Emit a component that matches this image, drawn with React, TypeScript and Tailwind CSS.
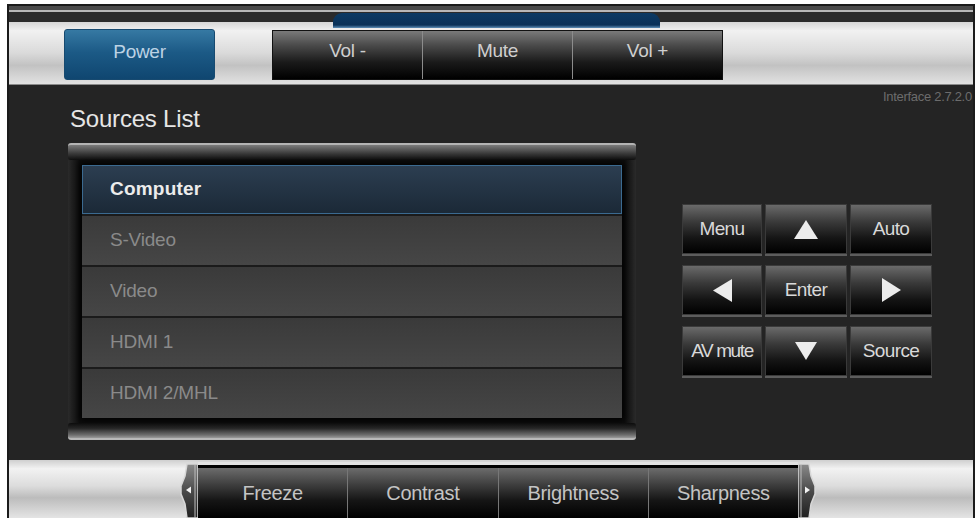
import React from 'react';

const volumeKeys = ['Vol -', 'Mute', 'Vol +'];
const sources = ['Computer', 'S-Video', 'Video', 'HDMI 1', 'HDMI 2/MHL'];
const pictureKeys = ['Freeze', 'Contrast', 'Brightness', 'Sharpness'];

type Dir = 'up' | 'down' | 'left' | 'right';

// solid arrow glyphs used on the navigation pad
function Arrow({ dir }: { dir: Dir }) {
  if (dir === 'up')
    return (
      <svg width="24" height="19" viewBox="0 0 24 19">
        <polygon points="12,0 24,19 0,19" fill="#ececec" />
      </svg>
    );
  if (dir === 'down')
    return (
      <svg width="22" height="18" viewBox="0 0 22 18">
        <polygon points="0,0 22,0 11,18" fill="#ececec" />
      </svg>
    );
  if (dir === 'left')
    return (
      <svg width="19" height="23" viewBox="0 0 19 23">
        <polygon points="19,0 19,23 0,11.5" fill="#ececec" />
      </svg>
    );
  return (
    <svg width="19" height="24" viewBox="0 0 19 24">
      <polygon points="0,0 19,12 0,24" fill="#ececec" />
    </svg>
  );
}

// scroll cap at either end of the picture-settings strip
function StripCap({ side }: { side: 'left' | 'right' }) {
  const flip = side === 'right';
  return (
    <svg width="18" height="56" viewBox="0 0 18 56" className={flip ? '-scale-x-100' : ''}>
      <defs>
        <linearGradient id={`cap-${side}`} x1="0" y1="0" x2="0" y2="1">
          <stop offset="0" stopColor="#8a8a8a" />
          <stop offset="0.5" stopColor="#4a4a4a" />
          <stop offset="1" stopColor="#202020" />
        </linearGradient>
      </defs>
      <path
        d="M18,2 L7,2 L5,14 L1,24 L1,32 L5,42 L7,56 L18,56 Z"
        fill={`url(#cap-${side})`}
        stroke="#d8d8d8"
        strokeWidth="1.5"
      />
      <line x1="15" y1="3" x2="15" y2="56" stroke="#bdbdbd" strokeWidth="1" />
      <polygon points="6,28 11,24.5 11,31.5" fill="#f2f2f2" />
    </svg>
  );
}

function PadKey({ children }: { children: React.ReactNode }) {
  return (
    <button className="flex h-[50px] items-center justify-center whitespace-nowrap border border-[#3a3a3a] bg-[linear-gradient(to_bottom,#6a6a6a,#3a3a3a_35%,#141414_70%,#000)] text-[19px] tracking-[-0.6px] text-[#d9d9d9] shadow-[0_2px_0_#5c5c5c]">
      {children}
    </button>
  );
}

export default function App() {
  return (
    <div className="h-[518px] w-[979px] overflow-hidden bg-white pl-[7px] pr-[4px] pt-[4px] font-['Liberation_Sans',Arial,sans-serif]">
      <div className="flex h-full flex-col border-x-2 border-t-2 border-[#1b1b1b] bg-[#242424]">
        {/* top rail with the blue status tab */}
        <div className="relative h-[16px] bg-[linear-gradient(to_bottom,#4a4a4a_0,#4a4a4a_4px,#b8b8b8_4px,#b8b8b8_6px,#2b2b2b_6px)]">
          <div className="absolute left-[324px] top-[7px] h-[15px] w-[327px] rounded-t-[9px] bg-[linear-gradient(to_bottom,#0c3a64,#0a3158_80%,#5d8fb8)]" />
        </div>

        {/* power + volume bar */}
        <div className="flex h-[63px] items-start border-b border-[#8a8a8a] bg-[linear-gradient(to_bottom,#d6d6d6,#f1f1f1_14%,#dadada_50%,#c2c2c2_70%,#e2e2e2)] pl-[55px] pt-[7px]">
          <button className="flex h-[51px] w-[151px] items-center justify-center rounded-[3px] border border-[#174a70] bg-[linear-gradient(to_bottom,#3679a3,#1c5a86_45%,#0f4670)] pb-[4px] text-[19px] tracking-[-0.3px] text-[#bcd2e4]">
            Power
          </button>
          <div className="ml-[57px] mt-[1px] flex h-[50px] w-[451px] border border-[#111] bg-black">
            {volumeKeys.map((k, i) => (
              <button
                key={k}
                className={`flex flex-1 items-center justify-center bg-[linear-gradient(to_bottom,#7a7a7a,#4a4a4a_30%,#1a1a1a_65%,#000)] pb-[7px] text-[19px] tracking-[-0.3px] text-[#cfcfcf] ${
                  i > 0 ? 'border-l border-[#8c8c8c]' : ''
                }`}
              >
                {k}
              </button>
            ))}
          </div>
        </div>

        {/* main area */}
        <div className="flex h-[375px] overflow-hidden">
          <div className="flex w-[627px] shrink-0 flex-col pl-[59px] pt-[20px]">
            <h1 className="pl-[2px] text-[24px] leading-[28px] tracking-[-0.2px] text-[#e6e6e6]">Sources List</h1>

            <div className="mt-[10px] flex w-[568px] flex-col">
              <div className="h-[17px] rounded-[3px] border-t-2 border-[#b4b4b4] bg-[linear-gradient(to_bottom,#7c7c7c,#3c3c3c_55%,#0e0e0e)]" />
              <div className="bg-[linear-gradient(to_right,#2a2a2a,#0d0d0d_2%,#0d0d0d_98%,#2a2a2a)] px-[14px] py-[5px]">
                <div className="flex flex-col gap-[2px] bg-[#1b1b1b] shadow-[0_0_6px_2px_#000]">
                  {sources.map((s, i) =>
                    i === 0 ? (
                      <div
                        key={s}
                        className="flex h-[49px] items-center border border-[#3b6a90] bg-[linear-gradient(to_bottom,#2c3e51,#1b2937)] pl-[27px] text-[19px] font-bold tracking-[0.2px] text-[#ececec]"
                      >
                        {s}
                      </div>
                    ) : (
                      <div
                        key={s}
                        className="flex h-[49px] items-center bg-[linear-gradient(to_bottom,#3a3a3a,#464646)] pl-[28px] text-[19px] tracking-[-0.2px] text-[#8a8a8a]"
                      >
                        {s}
                      </div>
                    )
                  )}
                </div>
              </div>
              <div className="h-[17px] rounded-[3px] border-b-2 border-[#b8b8b8] bg-[linear-gradient(to_bottom,#0c0c0c,#262626_35%,#6e6e6e_80%,#9a9a9a)]" />
            </div>
          </div>

          <div className="flex flex-1 flex-col">
            <div className="whitespace-nowrap pl-[247px] pt-[5px] text-[13px] leading-[14px] tracking-[-0.3px] text-[#6c6c6c]">
              Interface 2.7.2.0
            </div>
            <div className="ml-[46px] mt-[100px] grid w-[251px] grid-cols-[80px_82px_82px] gap-x-[3px] gap-y-[11px]">
              <PadKey>Menu</PadKey>
              <PadKey>
                <Arrow dir="up" />
              </PadKey>
              <PadKey>Auto</PadKey>
              <PadKey>
                <Arrow dir="left" />
              </PadKey>
              <PadKey>Enter</PadKey>
              <PadKey>
                <Arrow dir="right" />
              </PadKey>
              <PadKey>
                <span className="tracking-[-1.4px]">AV mute</span>
              </PadKey>
              <PadKey>
                <Arrow dir="down" />
              </PadKey>
              <PadKey>Source</PadKey>
            </div>
          </div>
        </div>

        {/* picture settings strip */}
        <div className="flex h-[58px] items-end bg-[linear-gradient(to_bottom,#cfcfcf,#f2f2f2_15%,#dcdcdc_45%,#bcbcbc_65%,#e4e4e4)] pl-[171px]">
          <StripCap side="left" />
          <div className="flex h-[56px] w-[600px] border-t-[3px] border-[#e2e2e2] bg-black pt-[3px]">
            {pictureKeys.map((k, i) => (
              <button
                key={k}
                className={`flex flex-1 items-center justify-center bg-[linear-gradient(to_bottom,#6c6c6c,#3c3c3c_35%,#151515_65%,#000)] text-[20px] tracking-[-0.3px] text-[#c4c4c4] ${
                  i > 0 ? 'border-l border-[#777]' : ''
                }`}
              >
                {k}
              </button>
            ))}
          </div>
          <StripCap side="right" />
        </div>
      </div>
    </div>
  );
}
